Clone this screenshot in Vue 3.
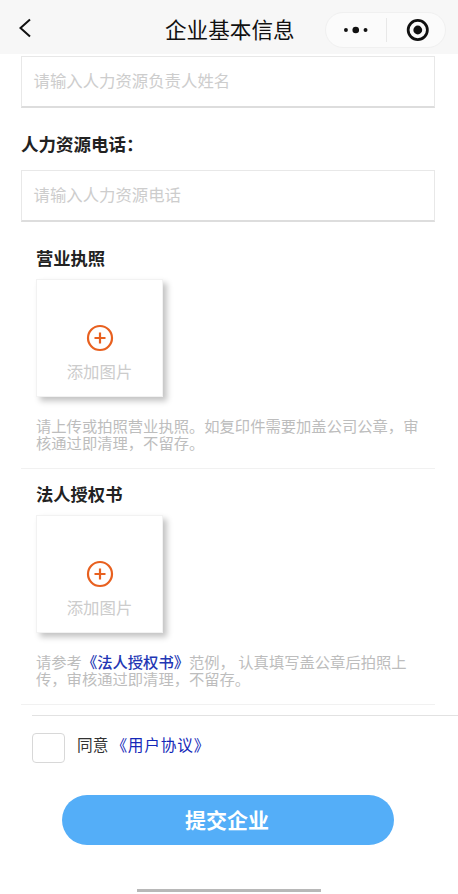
<script setup>
const sections = [
  { title: '营业执照', before: '请上传或拍照营业执照。如复印件需要加盖公司公章，审核通过即清理，不留存。' },
  { title: '法人授权书', before: '请参考', link: '《法人授权书》', after: '范例， 认真填写盖公章后拍照上传，审核通过即清理，不留存。' }
]
</script>

<template>
  <div class="page">
    <header class="nav">
      <svg class="back" width="14" height="20" viewBox="0 0 14 20"><path d="M12 1.500 2.500 10l9.500 8.500" fill="none" stroke="#111" stroke-width="2"/></svg>
      <span class="nav-title">企业基本信息</span>
      <div class="capsule">
        <svg width="26" height="8" viewBox="0 0 26 8"><circle cx="3" cy="4" r="2" fill="#111"/><circle cx="13" cy="4" r="3.400" fill="#111"/><circle cx="23" cy="4" r="2" fill="#111"/></svg>
        <i class="cap-line"></i>
        <svg width="24" height="24" viewBox="0 0 24 24"><circle cx="12" cy="12" r="9.800" fill="none" stroke="#111" stroke-width="2.800"/><circle cx="12" cy="12" r="4.500" fill="#111"/></svg>
      </div>
    </header>

    <main class="form">
      <div class="input first">请输入人力资源负责人姓名</div>
      <div class="label">人力资源电话：</div>
      <div class="input">请输入人力资源电话</div>

      <section v-for="s in sections" :key="s.title" class="upload">
        <h3>{{ s.title }}</h3>
        <div class="box">
          <svg width="28" height="28" viewBox="0 0 28 28"><circle cx="14" cy="14" r="12" fill="none" stroke="#e8601f" stroke-width="2.200"/><path d="M14 8.500v11M8.500 14h11" stroke="#e8601f" stroke-width="2.200"/></svg>
          <span>添加图片</span>
        </div>
        <p class="hint">{{ s.before }}<a v-if="s.link">{{ s.link }}</a>{{ s.after }}</p>
      </section>

      <div class="rule"></div>
      <div class="agree">
        <span class="check"></span>
        <span class="agree-text">同意<a>《用户协议》</a></span>
      </div>
      <button class="submit">提交企业</button>
    </main>
    <div class="home"></div>
  </div>
</template>

<style>
html, body { margin: 0; background: #fff; }
</style>
<style scoped>
.page { width: 458px; height: 894px; overflow: hidden; position: relative; background: #fff; font-family: "Noto Sans CJK SC", "Liberation Sans", sans-serif; }
.nav { height: 54px; background: #f7f7f7; display: flex; align-items: center; position: relative; }
.back { margin-left: 18px; margin-top: 1px; }
.nav-title { position: absolute; left: 165px; top: 15px; font-size: 21.600px; line-height: 28px; color: #111; white-space: nowrap; }
.capsule { position: absolute; left: 325px; top: 12px; width: 121px; height: 36px; box-sizing: border-box; border: 1px solid #f0f0f0; border-radius: 18px; background: #fbfbfb; display: flex; align-items: center; padding: 0 15px 0 17px; }
.cap-line { width: 1px; height: 24px; background: #e8e8e8; margin: 0 19px 0 18px; }
.form { padding: 0 23px 0 21px; }
.input { height: 52px; box-sizing: border-box; border: 1px solid #e8e8e8; border-bottom: 2px solid #ddd; padding-left: 11.500px; font-size: 16.400px; line-height: 47px; color: #cdcdcd; white-space: nowrap; }
.input.first { margin-top: 2px; }
.label { margin-top: 25px; margin-bottom: 15px; font-size: 17.500px; line-height: 22px; font-weight: 700; color: #222; }
.upload { border-bottom: 1px solid #f1f1f1; padding: 25px 0 17px 15px; }
.upload h3 { margin: 0 0 10px; font-size: 17.300px; line-height: 22px; font-weight: 700; color: #222; }
.upload + .upload { padding-top: 14px; }
.box { width: 127px; height: 118px; box-sizing: border-box; border: 1px solid #f2f2f2; background: #fff; box-shadow: 4px 4px 6px rgba(0,0,0,.24); display: flex; flex-direction: column; align-items: center; padding-top: 44px; }
.box span { margin-top: 7px; font-size: 16.400px; line-height: 24px; color: #ccc; white-space: nowrap; }
.hint { margin: 20px 0 0; font-size: 15.300px; line-height: 17px; color: #bdbdbd; width: 384px; }
.hint a { color: #2236b4; font-weight: 500; }
.rule { height: 1px; background: #e2e2e2; margin: 10px -23px 0 11px; }
.agree { display: flex; align-items: center; margin: 17px 0 0 11px; }
.check { width: 33px; height: 30px; box-sizing: border-box; border: 1px solid #d8d8d8; border-radius: 4px; }
.agree-text { margin-left: 12px; margin-top: -6px; font-size: 15.700px; line-height: 24px; color: #333; white-space: nowrap; }
.agree-text a { color: #1428b8; margin-left: 3px; letter-spacing: .8px; }
.submit { display: block; width: 332px; height: 50px; margin: 32px 0 0 41px; border: 0; border-radius: 25px; background: #54aef8; color: #fff; font: 700 21px/48px "Noto Sans CJK SC", sans-serif; padding: 0 2px 2px 0; }
.home { position: absolute; left: 137px; top: 889px; width: 184px; height: 3px; background: #b8b8b8; }
</style>
